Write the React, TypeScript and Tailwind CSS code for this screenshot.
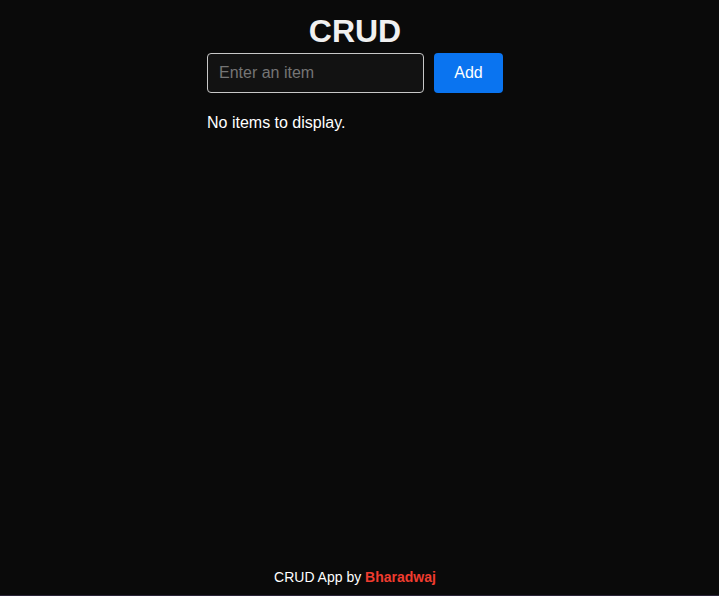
import React, { useState } from 'react';

interface Item {
  id: number;
  text: string;
}

export default function App() {
  const [items, setItems] = useState<Item[]>([]);
  const [value, setValue] = useState('');

  const addItem = () => {
    if (!value.trim()) return;
    setItems([...items, { id: Date.now(), text: value.trim() }]);
    setValue('');
  };

  return (
    <div className="min-h-screen bg-[#0a0a0a] text-white font-['Liberation_Sans',Arial,sans-serif] flex flex-col border-b border-[#2a2438]">
      <main className="flex-1 w-[710px] flex flex-col items-center">
        <div className="w-[296px] flex flex-col">
          <h1 className="mt-[13px] text-center text-[32px] leading-[37px] font-bold text-[#f0f0f0]">CRUD</h1>
          <div className="mt-[3px] flex gap-[10px]">
            <input
              value={value}
              onChange={(e) => setValue(e.target.value)}
              placeholder="Enter an item"
              className="w-[217px] h-10 px-[11px] rounded-[4px] border border-[#c8c8c8] bg-[#121212] text-base text-white placeholder:text-[#757575] outline-none"
            />
            <button
              onClick={addItem}
              className="w-[69px] h-10 rounded-[4px] bg-[#0a74f0] text-base text-white"
            >
              Add
            </button>
          </div>
          {items.length === 0 ? (
            <p className="mt-[21px] text-base leading-[18px]">No items to display.</p>
          ) : (
            <ul className="mt-[21px] flex flex-col gap-2">
              {items.map((item) => (
                <li key={item.id} className="text-base">{item.text}</li>
              ))}
            </ul>
          )}
        </div>
      </main>
      <footer className="w-[710px] pb-[10px] text-center text-sm leading-4">
        CRUD App by <span className="font-bold text-[#f03c2f]">Bharadwaj</span>
      </footer>
    </div>
  );
}
